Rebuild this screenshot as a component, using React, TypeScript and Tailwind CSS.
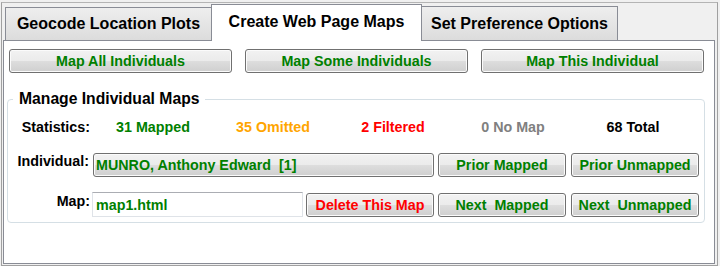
import React from 'react';

// --- Windows-style push button ---
const WinButton = ({
  label,
  color = 'text-[#008000]',
  className = '',
}: {
  label: string;
  color?: string;
  className?: string;
}) => (
  <button
    className={`flex items-center justify-center rounded-[3px] border border-[#707070] bg-[linear-gradient(to_bottom,#f2f2f2_0%,#ebebeb_48%,#dddddd_52%,#cfcfcf_100%)] shadow-[inset_0_0_0_1px_#fbfbfb] text-[14.3px] leading-none font-bold whitespace-pre ${color} ${className}`}
  >
    {label}
  </button>
);

const stats = [
  { label: '31 Mapped', color: 'text-[#008000]' },
  { label: '35 Omitted', color: 'text-[#ffa500]' },
  { label: '2 Filtered', color: 'text-[#ff0000]' },
  { label: '0 No Map', color: 'text-[#808080]' },
  { label: '68 Total', color: 'text-black' },
];

const App = () => {
  return (
    <div className="w-[720px] h-[266px] bg-[#f0f0f0] pl-px pt-[2px] font-['Liberation_Sans',Arial,sans-serif] font-bold text-black">
      <div className="w-[717px] h-[264px] border border-[#a0a0a0] border-t-[#b4b4b4] flex flex-col">
        {/* --- Tab strip --- */}
        <div className="h-[37px] flex items-end pl-[3px] text-[16px]">
          <div className="w-[207px] h-[33px] border border-b-0 border-[#898c95] bg-[linear-gradient(to_bottom,#eeeeee,#dcdcdc)] flex items-center justify-center">
            Geocode Location Plots
          </div>
          <div className="relative z-10 -ml-px -mb-px w-[211px] h-[37px] border border-b-0 border-[#898c95] bg-white flex items-center justify-center pb-[3px]">
            Create Web Page Maps
          </div>
          <div className="-ml-px w-[197px] h-[34px] border border-b-0 border-[#898c95] bg-[linear-gradient(to_bottom,#eeeeee,#dcdcdc)] flex items-center justify-center">
            Set Preference Options
          </div>
        </div>

        {/* --- Panel --- */}
        <div className="ml-px w-[712px] h-[224px] border border-[#898c95] bg-white">
          <div className="mt-[8px] ml-[5px] flex gap-[13px]">
            <WinButton label="Map All Individuals" className="w-[223px] h-[24px]" />
            <WinButton label="Map Some Individuals" className="w-[223px] h-[24px]" />
            <WinButton label="Map This Individual" className="w-[223px] h-[24px]" />
          </div>

          {/* --- Manage Individual Maps group --- */}
          <div className="relative mt-[26px] ml-[3px] w-[698px] h-[124px] rounded-[4px] border border-[#d5dfe5]">
            <div className="absolute left-[5px] -top-[10px] px-[6px] bg-white text-[15.7px] leading-[18px]">
              Manage Individual Maps
            </div>

            <div className="pt-[19px] flex text-[14.3px] leading-[16px]">
              <div className="w-[82px] text-right">Statistics:</div>
              <div className="ml-[3px] grid grid-cols-[repeat(5,120px)]">
                {stats.map((s) => (
                  <div key={s.label} className={`text-center ${s.color}`}>
                    {s.label}
                  </div>
                ))}
              </div>
            </div>

            <div className="mt-[18px] flex h-[24px] text-[14.3px] leading-[16px]">
              <div className="w-[81px] text-right">Individual:</div>
              <div className="ml-[4px] w-[341px] h-[24px] rounded-[3px] border border-[#707070] bg-[linear-gradient(to_bottom,#f2f2f2_0%,#ebebeb_48%,#dddddd_52%,#cfcfcf_100%)] shadow-[inset_0_0_0_1px_#fbfbfb] flex items-center pl-[2px] text-[#008000] whitespace-pre">
                MUNRO, Anthony Edward  [1]
              </div>
              <WinButton label="Prior Mapped" className="ml-[4px] w-[128px] h-[24px]" />
              <WinButton label="Prior Unmapped" className="ml-[5px] w-[128px] h-[24px]" />
            </div>

            <div className="mt-[15px] flex items-end h-[25px] text-[14.3px] leading-[16px]">
              <div className="w-[82px] text-right self-start mt-px">Map:</div>
              <div className="ml-[2px] w-[211px] h-[25px] border border-[#dfe3e8] border-t-[#abadb3] bg-white flex items-center pl-[3px] pt-px text-[#008000]">
                map1.html
              </div>
              <WinButton label="Delete This Map" color="text-[#ff0000]" className="ml-[3px] w-[128px] h-[24px]" />
              <WinButton label="Next  Mapped" className="ml-[4px] w-[128px] h-[24px]" />
              <WinButton label="Next  Unmapped" className="ml-[5px] w-[128px] h-[24px]" />
            </div>
          </div>
        </div>
      </div>
    </div>
  );
};

export default App;
